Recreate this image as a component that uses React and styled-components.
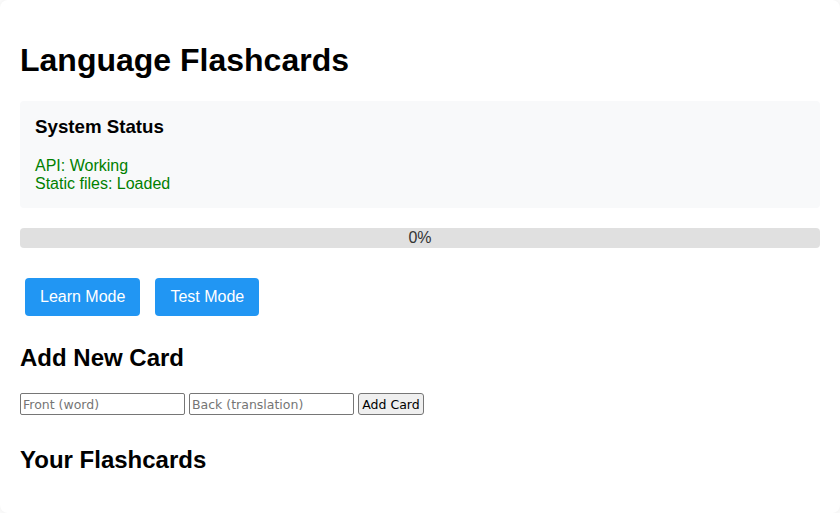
import React, { useState } from 'react';
import styled, { createGlobalStyle } from 'styled-components';

const GlobalStyle = createGlobalStyle`
  body {
    margin: 0;
    background: #fcfcfc;
    font-family: "Liberation Sans", Arial, sans-serif;
  }
`;

const Container = styled.div`
  max-width: 800px;
  margin: 0 auto;
  padding: 20px;
  background: #fff;
  border-radius: 8px;
  box-shadow: 0 0 6px rgba(0, 0, 0, 0.06);
`;

const Title = styled.h1`
  font-size: 32px;
  line-height: 37px;
  margin: 22px 0 22px;
`;

const StatusBox = styled.div`
  background: #f8f9fa;
  border-radius: 4px;
  padding: 15px;
  margin-bottom: 20px;
`;

const StatusTitle = styled.h3`
  font-size: 18.72px;
  line-height: 22px;
  margin: 0 0 19px;
`;

const StatusLine = styled.div`
  color: #008000;
  font-size: 16px;
  line-height: 18px;
`;

const Progress = styled.div`
  height: 20px;
  background: #e0e0e0;
  border-radius: 4px;
  display: flex;
  align-items: center;
  justify-content: center;
  color: #333;
  font-size: 16px;
  margin-bottom: 30px;
`;

const ModeRow = styled.div`
  display: flex;
  gap: 15px;
  padding-left: 5px;
`;

const ModeButton = styled.button`
  background: #2196f3;
  color: #fff;
  border: none;
  border-radius: 4px;
  padding: 10px 15px;
  font-family: "Liberation Sans", Arial, sans-serif;
  font-size: 16px;
  line-height: 18px;
  cursor: pointer;
`;

const SectionTitle = styled.h2`
  font-size: 24px;
  line-height: 28px;
  margin: ${(p) => p.$top}px 0 ${(p) => p.$bottom}px;
`;

const FormRow = styled.div`
  display: flex;
  gap: 4px;
  align-items: center;
`;

const Input = styled.input`
  width: 165px;
  height: 22px;
  box-sizing: border-box;
  border: 1px solid #767676;
  border-radius: 2px;
  padding: 1px 2px;
  font-family: "DejaVu Sans", sans-serif;
  font-size: 12.5px;
  &::placeholder {
    color: #757575;
  }
`;

const AddButton = styled.button`
  height: 22px;
  box-sizing: border-box;
  width: 66px;
  padding: 0;
  white-space: nowrap;
  border: 1px solid #767676;
  border-radius: 3px;
  background: #efefef;
  font-family: "DejaVu Sans", sans-serif;
  font-size: 12.5px;
  color: #000;
`;

export default function App() {
  const [front, setFront] = useState('');
  const [back, setBack] = useState('');

  return (
    <>
      <GlobalStyle />
      <Container>
        <Title>Language Flashcards</Title>
        <StatusBox>
          <StatusTitle>System Status</StatusTitle>
          <StatusLine>API: Working</StatusLine>
          <StatusLine>Static files: Loaded</StatusLine>
        </StatusBox>
        <Progress>0%</Progress>
        <ModeRow>
          <ModeButton>Learn Mode</ModeButton>
          <ModeButton>Test Mode</ModeButton>
        </ModeRow>
        <SectionTitle $top={28} $bottom={21}>Add New Card</SectionTitle>
        <FormRow>
          <Input placeholder="Front (word)" value={front} onChange={(e) => setFront(e.target.value)} />
          <Input placeholder="Back (translation)" value={back} onChange={(e) => setBack(e.target.value)} />
          <AddButton>Add Card</AddButton>
        </FormRow>
        <SectionTitle $top={31} $bottom={19}>Your Flashcards</SectionTitle>
      </Container>
    </>
  );
}
